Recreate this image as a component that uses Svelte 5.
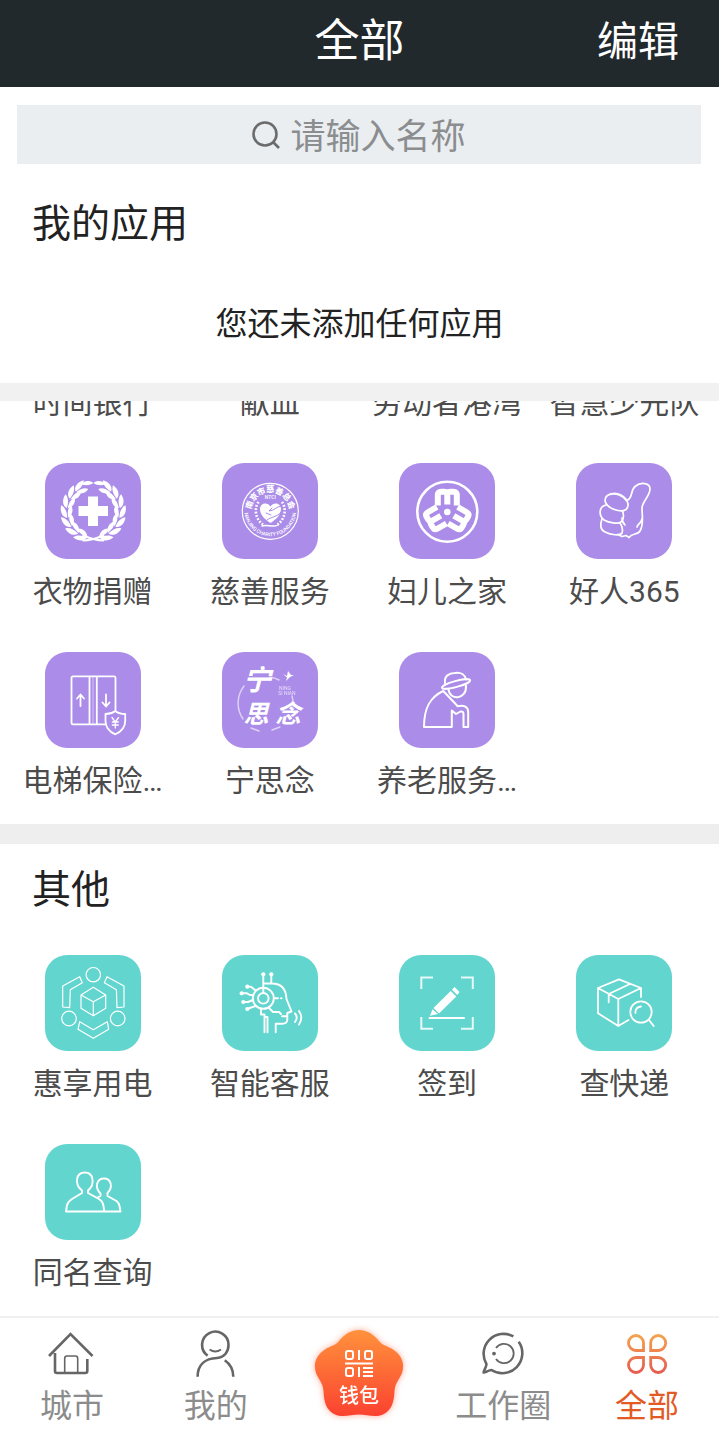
<script lang="ts">
  type App = { name: string; icon: string };

  const scrolled = ['时间银行', '献血', '劳动者港湾', '智慧少先队'];

  const welfare: App[] = [
    { name: '衣物捐赠', icon: 'wreath' },
    { name: '慈善服务', icon: 'charity' },
    { name: '妇儿之家', icon: 'women' },
    { name: '好人365', icon: 'thumb' },
    { name: '电梯保险…', icon: 'lift' },
    { name: '宁思念', icon: 'memorial' },
    { name: '养老服务…', icon: 'elder' },
  ];

  const others: App[] = [
    { name: '惠享用电', icon: 'power' },
    { name: '智能客服', icon: 'robot' },
    { name: '签到', icon: 'sign' },
    { name: '查快递', icon: 'parcel' },
    { name: '同名查询', icon: 'people' },
  ];

  const tabs = [
    { name: '城市', icon: 'home' },
    { name: '我的', icon: 'me' },
    { name: '钱包', icon: 'wallet' },
    { name: '工作圈', icon: 'circle' },
    { name: '全部', icon: 'all' },
  ];

  let keyword = $state('');
  let current = $state('全部');

  // leaf stations of the laurel, measured from the bottom of the ring
  const leaves = [22, 43, 64, 85, 106, 127, 147];
</script>

{#snippet glyph(icon: string)}
  <svg class="glyph" viewBox="0 0 96 96" aria-hidden="true">
    {#if icon === 'wreath'}
      <path class="solid" d="M43 33.500h10v9.500h10v10H53v10H43V53H33.500V43H43z" />
      {#each [1, -1] as side}
        <g transform="translate(48.300 48.500) scale({side} 1)">
          {#each leaves as a}
            <g class="solid" transform="rotate({-a}) translate(0 26)">
              <path d="M-4 0.500C-3 5.500 3 7.500 9 5.500C7 2 2 0 -4 0.500z" />
              <path d="M-4 -0.500C-1 -5.500 4 -6.500 8 -4.500C6 -1 2 0 -4 -0.500z" />
            </g>
          {/each}
          <path class="solid" d="M0-28.500C4-31.500 9-31 12-27.500C8-25.500 4-26 0-28.500z" />
          <path d="M-10 29C-4 29 3 27 10 24" stroke-width="2" />
        </g>
      {/each}
    {:else if icon === 'charity'}
      <defs>
        <path id="seal-top" d="M29.600 45A19 19 0 0 1 67 45" />
        <path id="seal-bottom" d="M22.500 44A26 26 0 1 0 74.100 44" />
      </defs>
      <circle cx="48.300" cy="48.300" r="28" stroke-width="1.200" />
      <text class="seal-cn"><textPath href="#seal-top" startOffset="50%">南京市慈善总会</textPath></text>
      <text class="seal-en"><textPath href="#seal-bottom" startOffset="50%">NANJING CHARITY FOUNDATION</textPath></text>
      <text class="seal-en" x="48.300" y="36">NTCI</text>
      <path class="solid" d="M48.500 60C42 56 38 51 38 46C38 40 45.500 38.500 48.500 43.500C51.500 38.500 59 40 59 46C59 51 55 56 48.500 60z" />
      <path class="cut" d="M59.500 43C54 43.500 52 48 47 48L50 45M45 57C48 54 56 54 59 49M44 50L49 52" />
      <path d="M36.500 39C32 45 33 56 41 61.500M60 39C64.500 45 63.500 56 55.500 61.500" stroke-width="2.600" stroke-dasharray="1.800 1.600" stroke-linecap="butt" />
      <path d="M40 63C45 61 51 65 56 62" stroke-width="1.400" />
    {:else if icon === 'women'}
      <circle cx="48.300" cy="48.700" r="30" stroke-width="2.600" />
      <circle class="solid" cx="48.300" cy="49" r="3.300" />
      {#each [0, 120, 240] as a}
        <path
          class="square"
          transform="translate(48.300 49) rotate({a})"
          d="M-9.500-6.500V-16.500Q-9.500-20.300-6-20.300H-3Q0-20.300 0-16.500V-7.500M0-16.500Q0-20.300 3-20.300H6Q9.500-20.300 9.500-16.500V-6.500"
          stroke-width="6"
        />
      {/each}
    {:else if icon === 'thumb'}
      <g stroke-width="1.700">
        <path d="M34 31.500C40 29.500 47 33 50.500 37.500C57 36 54 28 59 23.500C65 18.500 74 20 74 26C74 33 66 39 66 45C66 52 68 62 64 68C62 72 56 70 53 74.500L50 72.500L46 73.500L42 71.500" />
        <path d="M29 38C29 30 39 29 45 32C52 36 54 43 50 46.500C45 50 31 46 29 38z" />
        <path d="M30 42C22 44 23 53 28 57C33 60 42 61 45 59C48 56 48 52 46.500 48" />
        <path d="M26 56C24 61 24 67 29 69C35 72 44 73 46 70C47 67 46 63 44 60" />
        <path d="M46 55C46 58 47 60 49 62M66 56C65 61 62 60 61 64" />
      </g>
    {:else if icon === 'lift'}
      <g stroke-width="1.800">
        <path d="M60 72.300H28Q26.500 72.300 26.500 70.500V26Q26.500 24.300 28 24.300H69Q70.500 24.300 70.500 26V58M44.500 24.300V72M51.800 24.300V72" />
        <path d="M48 25V72" stroke-width="1" opacity="0.500" />
        <path d="M35.500 54V43M32 46.500L35.500 42.500L39 46.500M61 42.500V53M57.500 50.500L61 54.500L64.500 50.500" />
        <path d="M70.300 59C67 61.500 64 62 60.500 62V69C60.500 76 65 80 70.300 82.300C75.500 80 80.200 76 80.200 69V62C76.500 62 73.500 61.500 70.300 59z" />
        <path d="M67 65.500L70.300 70L73.600 65.500M70.300 70V76M67.300 70H73.300M67.300 73H73.300" stroke-width="1.300" />
      </g>
    {:else if icon === 'memorial'}
      <path d="M48 25A28 28 0 0 1 57 28M22 34A28 28 0 0 0 21 67M29 76L37 79M50 78L58 75M70 44A28 28 0 0 1 71 54" stroke-width="1.500" opacity="0.600" />
      <path class="solid" d="M61 22L65 24L66 19L69 23L72 23L68 25L64 29L65 25.500z" />
      <g class="brush">
        <text class="tall" x="35" y="38">宁</text>
        <text x="34" y="71">思</text>
        <text x="66" y="71">念</text>
      </g>
      <text class="tiny" x="63" y="38">NING</text>
      <text class="tiny" x="65" y="43">SI NIAN</text>
    {:else if icon === 'elder'}
      <g stroke-width="2">
        <ellipse cx="57" cy="32" rx="14.500" ry="3" transform="rotate(-15 57 32)" />
        <path d="M46 31C45 24 50 21 56 21C62 20 66 23 67 27.500M49.500 37C50 48.500 68 48.500 67 33.500" />
        <path d="M44.300 39C31 45 25 56 25 75H52.800V58.500L57 62L61.500 59.500Q64.500 59 64.500 62V75H69.200V60C69.200 55 65 52.500 58.700 54.300z" />
      </g>
    {:else if icon === 'power'}
      <g stroke-width="1.200">
        <circle cx="48.300" cy="19.700" r="7.200" />
        <circle cx="24" cy="63.500" r="7.300" />
        <circle cx="72.700" cy="63.500" r="7.300" />
        <path d="M34.700 21.700L17.700 31V52L24.700 52.700L25.300 34.700L37.300 27.700zM62 21.700L79 31V52L72 52.700L71.400 34.700L59.400 27.700z" />
        <path d="M34.700 66.700L48.300 74.700L62.300 66.700L63.700 74.300L48.300 83.300L33 74.300z" />
        <path d="M48.300 32.300L60.700 40V53.300L48.300 60.700L36 53.300V40zM36 40L48.300 46.700L60.700 40M48.300 46.700V60.700" />
      </g>
    {:else if icon === 'robot'}
      <g stroke-width="1.900">
        <circle cx="41.300" cy="43.300" r="10.500" />
        <circle cx="41.300" cy="43.300" r="5.300" />
        <path d="M41.300 20V38M49.300 20V28M43 28.500H50C59 28.500 64 34 64.500 44L69.500 56.500L65.300 58V65Q65 68.700 60 68.700H53.700V77.300M60 61.300H65" />
        <path d="M39 54V59.500H42.500V77.300M45.500 62V77.300M42.500 62H45.500M47 53L51 57H57L59 59M52.500 43.300H56M59 43.300H59.500" />
        <path d="M25.300 31.700H29L33 35H34.500M19.700 38.300H25L28 40H31M21.300 47H26L31 45M25.300 54L29 52.500L34 51" />
        <path d="M73 58.500Q76.500 62.500 73 67M77 56Q81.500 62.500 77 69.500" />
      </g>
      {#each [[41.3, 19.3], [49.3, 19.3], [25.3, 31.7], [19.7, 38.3], [21.3, 47], [25.3, 54]] as [x, y]}
        <circle class="solid" cx={x} cy={y} r="2.100" />
      {/each}
    {:else if icon === 'sign'}
      <path class="square" d="M22.300 34V22.500H34M62 22.500H73.800V34M73.800 62V73.700H62M34 73.700H22.300V62" stroke-width="2" opacity="0.850" />
      <path d="M30.500 63H65" stroke-width="2" />
      <path class="solid" d="M34.500 53L51.700 36L57.300 41.500L40 58.500zM53 34.800L55.500 32L60.500 37L58.300 40zM33.500 54.200L39 59L31 60.800z" />
    {:else if icon === 'parcel'}
      <g stroke-width="1.800">
        <path d="M65 42V33L43 24.300L22 33V58.300L42.300 71L52.500 65M22 33L42.300 44L65 33M42.300 44V71M32.700 47.300V39L54 29" />
        <circle cx="65" cy="57" r="10.700" />
        <path d="M59.500 58Q59 52 65 51.500M73 65L77.700 71" />
      </g>
    {:else if icon === 'people'}
      <g stroke-width="1.900">
        <path d="M59.300 67.500L58.300 61Q57.500 57 54 55L43 49V46.500C50.500 40 48.500 28.500 39.800 28.500C31 28.500 29 40 37 46.500V49L27 55Q23 57.500 22 61L21 67.500H75.500L74.500 62Q74 59 71.500 57L62.500 52V49C68.500 43 66 34.500 59 34.500C52 34.500 49 43 55.500 49.500V52L52.500 53.500" />
      </g>
    {/if}
  </svg>
{/snippet}

{#snippet tabIcon(icon: string)}
  <svg class="tab-icon" viewBox="0 0 48 48" aria-hidden="true">
    {#if icon === 'home'}
      <path d="M1 26L22.500 4L44.500 26M7 23V41Q7 43 9 43H37Q39.300 43 39.300 41V29" />
      <path d="M16.700 43V28.500Q16.700 26 19 26H27.500Q29.700 26 29.700 28.500V43" stroke-width="1.600" />
    {:else if icon === 'me'}
      <path d="M15.600 25.600A13.200 13.200 0 1 1 36.500 15C36.500 21 33 27.500 25 28C13 28.500 5.600 35 5.600 46.700M32.800 30.300C38 34 41.300 40 41.300 46.700" />
      <path d="M17.600 19.500Q23.300 23.500 29 19.500" stroke-width="1.800" />
    {:else if icon === 'circle'}
      <path d="M34.400 6.400A20 20 0 0 0 7.400 34C7.800 36.500 4.700 40 4.700 42.500C6 43 9.500 40 12.500 40A20 20 0 0 0 39.700 11.700" />
      <path d="M17 18A9.700 9.700 0 1 1 17 29" stroke-width="1.800" />
      <circle class="dot" cx="15" cy="23.600" r="1.900" />
    {:else if icon === 'all'}
      <defs>
        <linearGradient id="petal" gradientUnits="userSpaceOnUse" x1="0" y1="4" x2="0" y2="44">
          <stop offset="0" stop-color="#f3a54f" />
          <stop offset="1" stop-color="#e65a50" />
        </linearGradient>
      </defs>
      <path
        class="petal"
        d="M20.500 20.500H13A7.500 7.500 0 1 1 20.500 13zM27.700 20.500V13A7.500 7.500 0 1 1 35.200 20.500zM20.500 27.500V35A7.500 7.500 0 1 1 13 27.500zM27.700 27.500H35.200A7.500 7.500 0 1 1 27.700 35z"
      />
    {/if}
  </svg>
{/snippet}

{#snippet grid(apps: App[], tone: string)}
  <div class="grid">
    {#each apps as app}
      <a class="app" href="#{app.icon}">
        <span class="tile {tone}">{@render glyph(app.icon)}</span>
        <span class="label">{app.name}</span>
      </a>
    {/each}
  </div>
{/snippet}

<div class="page">
  <header>
    <h1>全部</h1>
    <button class="edit" type="button">编辑</button>
  </header>

  <label class="search">
    <svg viewBox="0 0 30 30" aria-hidden="true">
      <circle cx="14" cy="14" r="11.500" />
      <path d="M22 22L28 28" />
    </svg>
    <input type="text" placeholder="请输入名称" aria-label="请输入名称" bind:value={keyword} />
  </label>

  <section class="mine">
    <h2>我的应用</h2>
    <p>您还未添加任何应用</p>
  </section>

  <main>
    <section class="group">
      <div class="scrolled">
        {#each scrolled as name}
          <span class="label">{name}</span>
        {/each}
      </div>
      {@render grid(welfare, 'purple')}
    </section>

    <section class="group divided">
      <h2>其他</h2>
      {@render grid(others, 'teal')}
    </section>
  </main>

  <nav>
    {#each tabs as tab}
      <button
        type="button"
        class="tab"
        class:active={tab.name === current}
        onclick={() => (current = tab.name)}
      >
        {#if tab.icon === 'wallet'}
          <svg class="wallet" viewBox="0 0 88 88">
            <defs>
              <linearGradient id="flame" x1="0" y1="0" x2="0" y2="1">
                <stop offset="0" stop-color="#ff923c" />
                <stop offset="1" stop-color="#fb4230" />
              </linearGradient>
            </defs>
            <path
              fill="url(#flame)"
              d="M44 0C53 0 59 5 64 11C68 16 73 16 78 19.500C87 25 90 34 87 43C84 50 80 53 79.500 61C79 72 77 80 68 84.500C60 88 52 84.500 44 84.500C36 84.500 28 88 20 84.500C11 80 9 72 8.500 61C8 53 4 50 1 43C-2 34 1 25 10 19.500C15 16 20 16 24 11C29 5 35 0 44 0z"
            />
            <g class="code">
              <rect x="31" y="21" width="7" height="8" rx="2" />
              <rect x="50" y="21" width="7" height="8" rx="2" />
              <rect x="31" y="38" width="7" height="8" rx="2" />
              <path d="M44 20V30M30 33.500H58M44 37V47M48 38H58M48 42H58M48 46H58" />
            </g>
            <text x="44" y="73">{tab.name}</text>
          </svg>
        {:else}
          {@render tabIcon(tab.icon)}
          <span class="tab-name">{tab.name}</span>
        {/if}
      </button>
    {/each}
  </nav>
</div>

<style>
  :global(body) {
    margin: 0;
    background: #fff;
  }

  .page {
    font-family: Roboto, "Noto Sans CJK SC", sans-serif;
    color: #222;
    background: #fff;
  }

  h1, h2, p { margin: 0; font-weight: 400; }

  button {
    border: 0;
    padding: 0;
    background: none;
    font: inherit;
    color: inherit;
  }

  header {
    display: grid;
    grid-template-columns: 1fr auto 1fr;
    align-items: center;
    height: 87px;
    padding: 0 40px;
    box-sizing: border-box;
    background: #22292c;
    color: #fff;
  }

  h1 {
    grid-column: 2;
    font-size: 45px;
    line-height: 80px;
    padding-bottom: 4px;
  }

  .edit {
    justify-self: end;
    font-size: 41px;
    line-height: 80px;
    padding-bottom: 4px;
  }

  .search {
    display: flex;
    justify-content: center;
    align-items: center;
    gap: 10px;
    height: 59px;
    margin: 18px 18px 0 17px;
    padding-right: 2px;
    background: #eaeef1;
  }

  .search svg {
    width: 30px;
    height: 30px;
    fill: none;
    stroke: #6b6b6b;
    stroke-width: 2.6;
  }

  .search input {
    width: 175px;
    height: 50px;
    padding: 5px 0 0;
    border: 0;
    outline: 0;
    background: none;
    font: inherit;
    font-size: 35px;
    color: #222;
  }

  .search input::placeholder { color: #8b8d8f; opacity: 1; }

  h2 {
    padding: 0 32px;
    font-size: 39px;
    line-height: 56px;
  }

  .mine { padding: 32px 0 37px; }

  .mine p {
    margin-top: 50px;
    font-size: 32px;
    line-height: 44px;
    text-align: center;
  }

  main { border-top: 18px solid #f1f1f1; }

  .group { padding-bottom: 22px; }

  .divided {
    border-top: 20px solid #eee;
    padding-top: 18px;
  }

  .divided h2 { margin-bottom: 37px; }

  .grid, .scrolled {
    display: grid;
    grid-template-columns: repeat(4, 1fr);
    padding: 0 6px 0 4px;
  }

  .grid { row-gap: 39px; }

  .scrolled {
    align-content: end;
    height: 23px;
    margin-bottom: 39px;
    overflow: hidden;
  }

  .app {
    display: flex;
    flex-direction: column;
    align-items: center;
    gap: 12px;
    text-decoration: none;
  }

  .label {
    font-size: 30px;
    line-height: 42px;
    color: #4c4c4c;
    text-align: center;
    white-space: nowrap;
  }

  .tile {
    width: 96px;
    height: 96px;
    border-radius: 22px;
  }

  .purple { background: #ab8ce8; }
  .teal { background: #62d5cf; }

  .glyph {
    display: block;
    fill: none;
    stroke: #fff;
    stroke-linecap: round;
    stroke-linejoin: round;
  }

  .glyph .solid, .glyph text { fill: #fff; stroke: none; }
  .glyph .square { stroke-linecap: butt; stroke-linejoin: miter; }
  .glyph .cut { stroke: #ab8ce8; stroke-width: 1; }
  .glyph text { text-anchor: middle; }

  .seal-cn { font-size: 8px; font-weight: 900; }
  .seal-en { font-size: 5px; font-weight: 500; }
  .brush { font-size: 25px; font-weight: 700; font-style: italic; }
  .tall { font-size: 28px; }
  .tiny { font-size: 5px; opacity: 0.7; }

  nav {
    display: grid;
    grid-template-columns: repeat(5, 1fr);
    border-top: 2px solid #f0f0f0;
  }

  .tab {
    display: flex;
    flex-direction: column;
    align-items: center;
    gap: 8px;
    padding: 12px 0 4px;
    color: #8c8c8c;
  }

  .tab-icon {
    width: 48px;
    height: 48px;
    fill: none;
    stroke: #666;
    stroke-width: 2.6;
  }

  .tab-icon .dot { fill: #666; stroke: none; }
  .tab-icon .petal { stroke: url(#petal); stroke-width: 2.8; }

  .tab-name { font-size: 32px; line-height: 40px; }

  .active { color: #e25a24; }

  .wallet {
    width: 88px;
    height: 88px;
    overflow: visible;
    filter: drop-shadow(0 0 3px rgba(255, 90, 50, 0.5));
  }

  .wallet text {
    fill: #fff;
    font-size: 20px;
    font-weight: 500;
    text-anchor: middle;
  }

  .code { fill: none; stroke: #fff; stroke-width: 2; }
</style>
